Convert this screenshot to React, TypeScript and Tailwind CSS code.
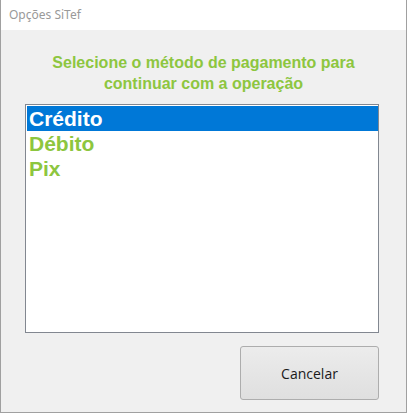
export default function App() {
  return (
    <div className="w-[407px] h-[413px] flex flex-col bg-[#f0f0f0] border-x border-b border-[#a0a0a0] overflow-hidden">
      <div className="h-[30px] shrink-0 bg-white flex items-center pl-[8px] text-[12px] text-[#999999]" style={{ fontFamily: '"Noto Sans", "Open Sans", sans-serif' }}>
        Opções SiTef
      </div>
      <div className="flex-1 flex flex-col pl-[24px] pr-[27px]" style={{ fontFamily: '"Liberation Sans", Arial, sans-serif' }}>
        <div className="mt-[22px] -mr-[3px] text-center font-bold text-[16px] leading-[21px] text-[#8dc63f]">
          Selecione o método de pagamento para
          <br />
          continuar com a operação
        </div>
        <div className="mt-[10px] h-[229px] border border-[#828790] bg-white pl-[1px] pt-[1px] flex flex-col">
          <div className="h-[25px] bg-[#0078d7] text-white font-bold text-[21px] leading-[25px] pl-[2px]">Crédito</div>
          <div className="h-[25px] text-[#8dc63f] font-bold text-[21px] leading-[25px] pl-[2px]">Débito</div>
          <div className="h-[25px] text-[#8dc63f] font-bold text-[21px] leading-[25px] pl-[2px]">Pix</div>
        </div>
        <div className="flex justify-end mt-[13px]">
          <button
            className="w-[139px] h-[54px] rounded-[3px] border border-[#adadad] bg-gradient-to-b from-[#ececec] to-[#dfdfdf] text-[14px] text-[#1a1a1a]"
            style={{ fontFamily: '"Open Sans", "Noto Sans", sans-serif' }}
          >
            Cancelar
          </button>
        </div>
      </div>
    </div>
  );
}
